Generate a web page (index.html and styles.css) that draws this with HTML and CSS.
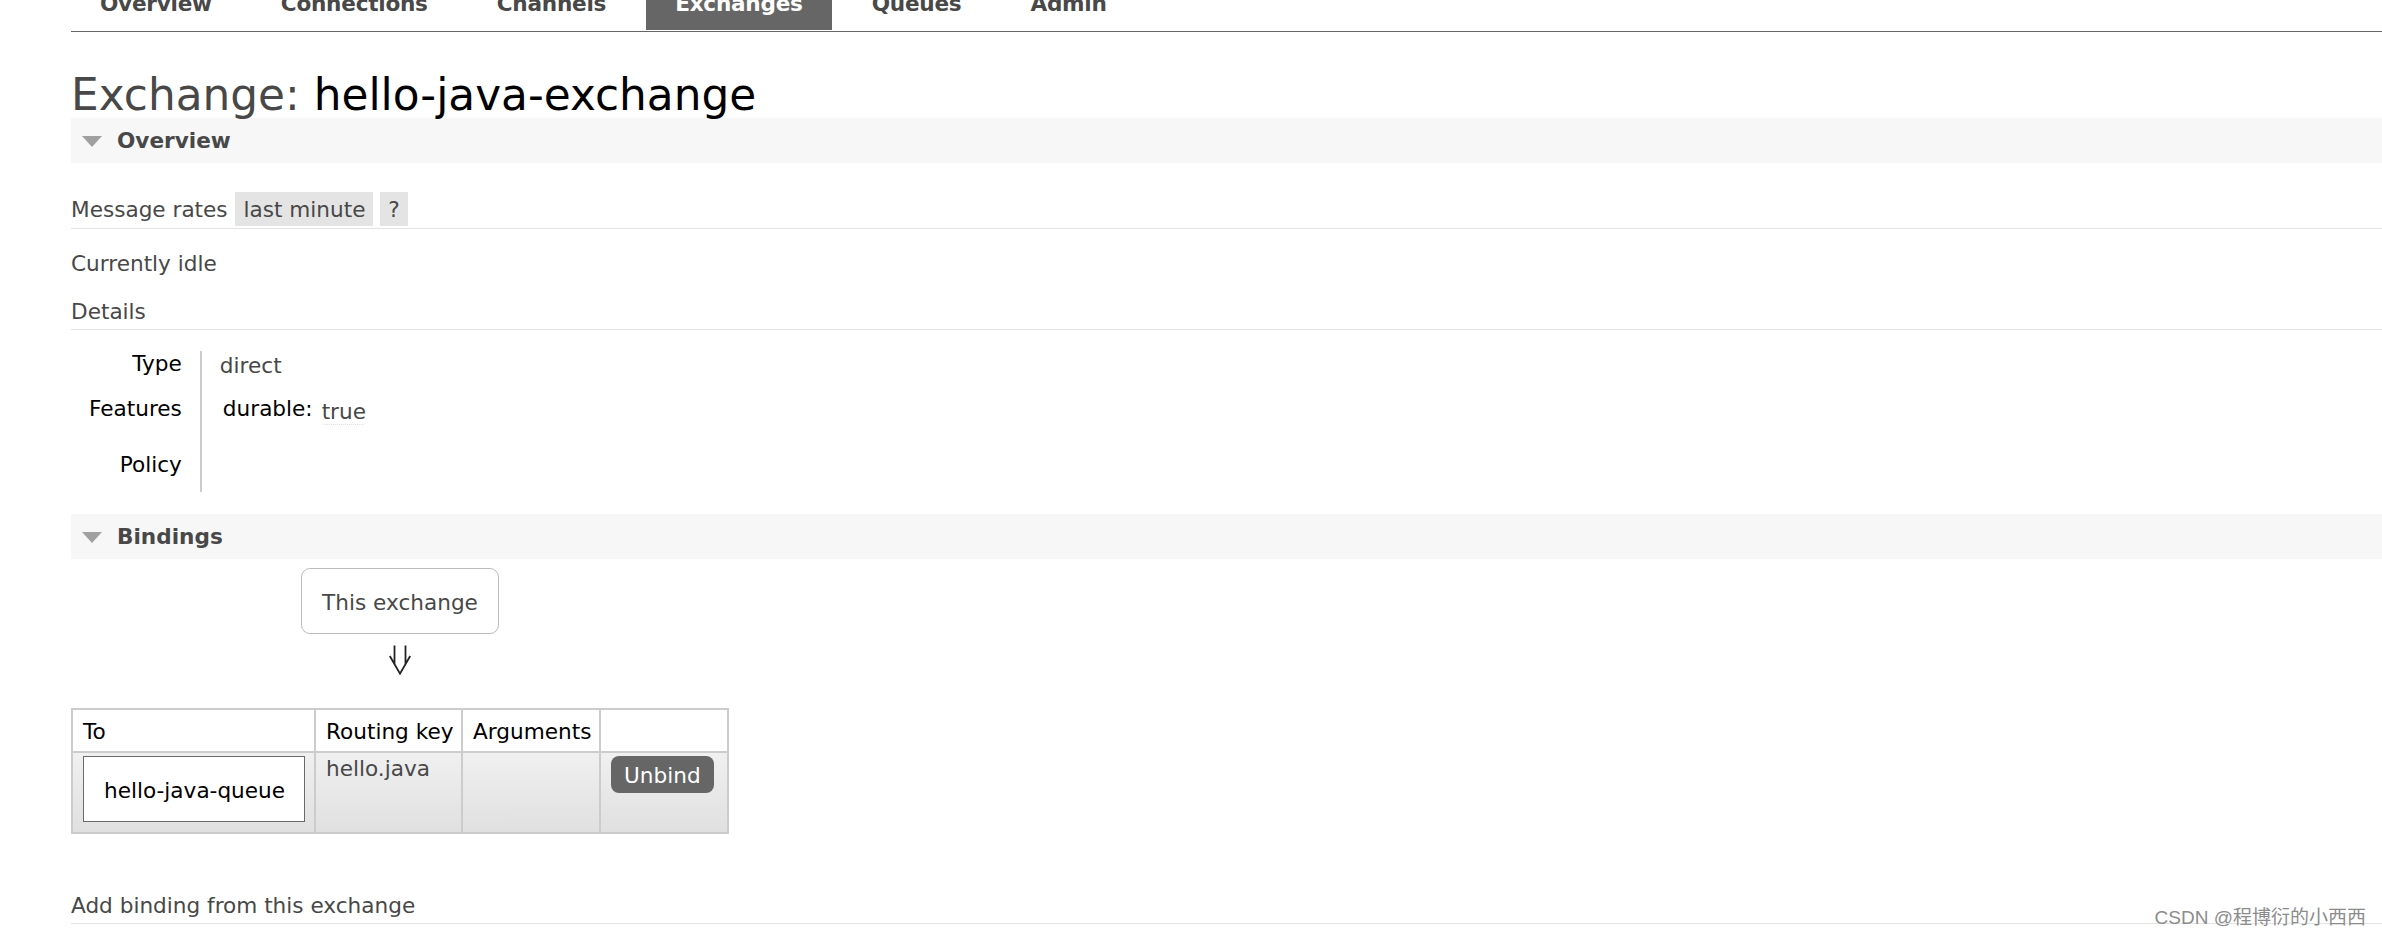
FILE: index.html
```html
<!DOCTYPE html>
<html lang="en">
<head>
<meta charset="utf-8">
<title>RabbitMQ Management: Exchange hello-java-exchange</title>
<link rel="stylesheet" href="styles.css">
</head>
<body>
<div class="page">
  <nav class="menu">
    <a class="tab">Overview</a>
    <a class="tab">Connections</a>
    <a class="tab">Channels</a>
    <a class="tab selected">Exchanges</a>
    <a class="tab">Queues</a>
    <a class="tab">Admin</a>
  </nav>
  <main class="main">
    <h1 class="title">Exchange: <b>hello-java-exchange</b></h1>
    <section class="section">
      <h2 class="section-head"><span class="tri"></span>Overview</h2>
      <h3 class="subhead rates">Message rates <span class="pill first">last minute</span> <span class="pill">?</span></h3>
      <p class="idle">Currently idle</p>
      <h3 class="subhead details">Details</h3>
      <table class="facts">
        <tr class="r-type"><th>Type</th><td class="v-type">direct</td></tr>
        <tr class="r-feat"><th>Features</th><td><span class="feat-key">durable:</span><span class="feat-val">true</span></td></tr>
        <tr class="r-pol"><th>Policy</th><td></td></tr>
      </table>
    </section>
    <section class="section bindings">
      <h2 class="section-head"><span class="tri"></span>Bindings</h2>
      <div class="bind-wrap">
        <div class="node">This exchange</div>
        <svg class="down" width="22" height="30" viewBox="0 0 22 30" aria-label="⇓">
          <path d="M5.5 0.5 V19.5 M16.5 0.5 V19.5 M0.8 11 L11 28.6 L21.2 11" fill="none" stroke="#222" stroke-width="1.8"/>
        </svg>
        <table class="list">
          <tr>
            <th class="c1">To</th>
            <th class="c2">Routing key</th>
            <th class="c3">Arguments</th>
            <th class="c4"></th>
          </tr>
          <tr>
            <td><a class="queue-link">hello-java-queue</a></td>
            <td>hello.java</td>
            <td></td>
            <td><button class="btn">Unbind</button></td>
          </tr>
        </table>
      </div>
      <h3 class="subhead add">Add binding from this exchange</h3>
    </section>
  </main>
  <div class="watermark">CSDN @程博衍的小西西</div>
</div>
</body>
</html>
```

FILE: styles.css
```css
html, body {
  margin: 0;
  padding: 0;
  background: #fff;
}

body {
  height: 937px;
  overflow: hidden;
  font-family: "DejaVu Sans", Verdana, sans-serif;
  font-size: 21.6px;
  line-height: 25px;
  color: #484848;
}

.page {
  display: flow-root;
  position: relative;
  height: 937px;
  padding-left: 71px;
  box-sizing: border-box;
}

/* ---------- top menu ---------- */
.menu {
  display: flex;
  gap: 11px;
  margin-top: -22px;
  padding-bottom: 1px;
  border-bottom: 1px solid #666;
}

.tab {
  display: block;
  padding: 13px 29px 14px;
  line-height: 25px;
  font-weight: bold;
  letter-spacing: -0.25px;
  color: #484848;
  text-decoration: none;
}

.tab.selected {
  background: #666;
  color: #fff;
}

/* ---------- heading ---------- */
.title {
  margin: 40px 0 0;
  font-size: 43.8px;
  line-height: 46px;
  font-weight: normal;
  color: #484848;
}

.title b {
  font-weight: normal;
  color: #000;
}

/* ---------- sections ---------- */
.section-head {
  display: flex;
  align-items: center;
  height: 45px;
  margin: 0;
  background: #f7f7f7;
  font-size: 21.6px;
  line-height: 25px;
  font-weight: bold;
  color: #484848;
}

.tri {
  width: 0;
  height: 0;
  margin: 2px 15px 0 11px;
  border-left: 10px solid transparent;
  border-right: 10px solid transparent;
  border-top: 11px solid #a0a0a0;
}

.subhead {
  margin: 0;
  font-size: 21.6px;
  line-height: 25px;
  font-weight: normal;
  color: #484848;
  border-bottom: 1px solid #e4e4e4;
}

.rates {
  margin-top: 29px;
  padding-bottom: 2px;
}

.pill {
  display: inline-block;
  padding: 5px 8px 4px;
  background: #e4e4e4;
  line-height: 25px;
}

.pill.first {
  margin-left: 1px;
}

.idle {
  margin: 22px 0 0;
}

.details {
  margin-top: 23px;
  padding-bottom: 5px;
}

/* ---------- facts table ---------- */
.facts {
  margin-top: 21px;
  border-collapse: separate;
  border-spacing: 0;
}

.facts th {
  padding: 0 18px 20px;
  text-align: right;
  vertical-align: top;
  font-weight: normal;
  color: #000;
  border-right: 2px solid #ccc;
}

.facts td {
  padding: 0 18px;
  vertical-align: top;
}

.facts .v-type {
  padding-top: 2px;
}

.facts .r-feat th {
  padding-bottom: 31px;
}

.facts .r-pol th {
  padding-bottom: 15px;
}

.feat-key {
  padding-left: 3px;
  color: #000;
}

.feat-val {
  display: inline-block;
  margin-left: 9px;
  vertical-align: -3px;
  line-height: 25px;
  border-bottom: 1px dotted #ddd;
  border-radius: 3px;
}

.bindings {
  margin-top: 22px;
}

/* ---------- bindings ---------- */
.bind-wrap {
  display: flex;
  flex-direction: column;
  align-items: center;
  width: 658px;
}

.node {
  margin-top: 9px;
  padding: 21px 20px 18px;
  border: 1px solid #bbb;
  border-radius: 9px;
  line-height: 25px;
  color: #484848;
}

.down {
  display: block;
  margin-top: 11px;
}

.list {
  margin-top: 33px;
  width: 658px;
  box-sizing: border-box;
  table-layout: fixed;
  border-collapse: separate;
  border-spacing: 0;
  border-top: 2px solid #ccc;
  border-left: 2px solid #ccc;
}

.list th,
.list td {
  box-sizing: border-box;
  border-right: 2px solid #ccc;
  border-bottom: 2px solid #ccc;
  vertical-align: top;
  text-align: left;
  white-space: nowrap;
}

.list th {
  padding: 9px 6px 7px 10px;
  font-weight: normal;
  color: #000;
  background: #fff;
}

.list td {
  padding: 3px 9px 10px 10px;
  background: linear-gradient(#f0f0f0, #e0e0e0);
}

.list .c1 { width: 243px; }
.list .c2 { width: 147px; }
.list .c3 { width: 138px; }
.list .c4 { width: 128px; }

.queue-link {
  display: block;
  padding: 21px 16px 18px 20px;
  border: 1px solid #6a6a6a;
  background: #fff;
  color: #000;
  line-height: 25px;
  white-space: nowrap;
}

.btn {
  display: inline-block;
  margin: 0;
  padding: 7px 13px 5px;
  border: 0;
  border-radius: 8px;
  background: #666;
  color: #fff;
  font: inherit;
  line-height: 25px;
}

.add {
  margin-top: 59px;
  padding-bottom: 5px;
}

/* ---------- watermark overlay ---------- */
.watermark {
  position: absolute;
  right: 16px;
  bottom: 9px;
  font-family: "Liberation Sans", "Noto Sans CJK SC", sans-serif;
  font-size: 19px;
  line-height: 20px;
  color: #8c8c8c;
  text-shadow: 0 0 1px #fff;
}
```
